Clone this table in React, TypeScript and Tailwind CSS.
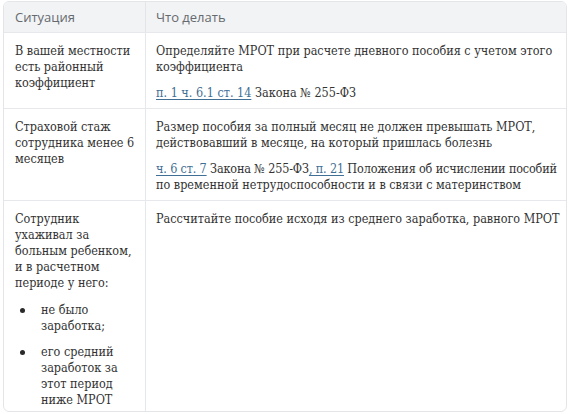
import { FC, ReactNode } from "react";

const serif = "font-['DejaVu_Serif_Condensed','Liberation_Serif',serif]";

const Link: FC<{ children: ReactNode }> = ({ children }) => (
	<a href="#" className="text-[#3f6f94] underline underline-offset-2 decoration-[#3f6f94]">
		{children}
	</a>
);

const Row: FC<{ left: ReactNode; right: ReactNode; last?: boolean }> = ({ left, right, last }) => (
	<div className={`grid grid-cols-[142px_1fr] ${last ? "" : "border-b border-[#e6e8eb]"}`}>
		<div className="border-r border-[#e6e8eb] pl-[11px] pr-[6px] pt-[10px] pb-[7px]">{left}</div>
		<div className="pl-[10px] pr-[2px] pt-[10px] pb-[7px]">{right}</div>
	</div>
);

const Bullet: FC<{ children: ReactNode; className?: string }> = ({ children, className }) => (
	<li className={`flex ${className ?? ""}`}>
		<span className="w-[26px] shrink-0 pl-[5px] pt-[6px]">
			<span className="block w-[5px] h-[5px] rounded-full bg-[#2a2a2a]" />
		</span>
		<span>{children}</span>
	</li>
);

const App: FC = () => {
	return (
		<div className="w-[572px] h-[414px] bg-white pt-px pl-[3px] pr-[5px] pb-[2px]">
			<div
				className={`h-full rounded-[6px] border border-[#e3e5e8] overflow-hidden text-[12.5px] leading-[16px] text-[#333333] ${serif}`}>
				<div className="grid grid-cols-[142px_1fr] h-[31px] bg-[#f1f3f5] border-b border-[#e6e8eb] font-['Open_Sans',sans-serif] text-[13px] text-[#666a6e]">
					<div className="border-r border-[#e3e5e8] pl-[11px] flex items-center">Ситуация</div>
					<div className="pl-[10px] flex items-center">Что делать</div>
				</div>

				<Row
					left={<p>В вашей местности есть районный коэффициент</p>}
					right={
						<>
							<p>Определяйте МРОТ при расчете дневного пособия с учетом этого коэффициента</p>
							<p className="mt-[10px]">
								<Link>п. 1 ч. 6.1 ст. 14</Link> Закона № 255-ФЗ
							</p>
						</>
					}
				/>

				<Row
					left={<p>Страховой стаж сотрудника менее 6 месяцев</p>}
					right={
						<>
							<p>
								Размер пособия за полный месяц не должен превышать МРОТ, действовавший в месяце, на который
								пришлась болезнь
							</p>
							<p className="mt-[10px]">
								<span className="whitespace-nowrap tracking-[-0.15px]">
									<Link>ч. 6 ст. 7</Link> Закона № 255-ФЗ<Link>, п. 21</Link> Положения об исчислении пособий
								</span>
								<br />
								по временной нетрудоспособности и в связи с материнством
							</p>
						</>
					}
				/>

				<Row
					last
					left={
						<>
							<p>Сотрудник ухаживал за больным ребенком, и в расчетном периоде у него:</p>
							<ul className="mt-[11px] pr-[6px]">
								<Bullet>не было заработка;</Bullet>
								<Bullet className="mt-[10px]">его средний заработок за этот период ниже МРОТ</Bullet>
							</ul>
						</>
					}
					right={<p>Рассчитайте пособие исходя из среднего заработка, равного МРОТ</p>}
				/>
			</div>
		</div>
	);
};

export default App;
